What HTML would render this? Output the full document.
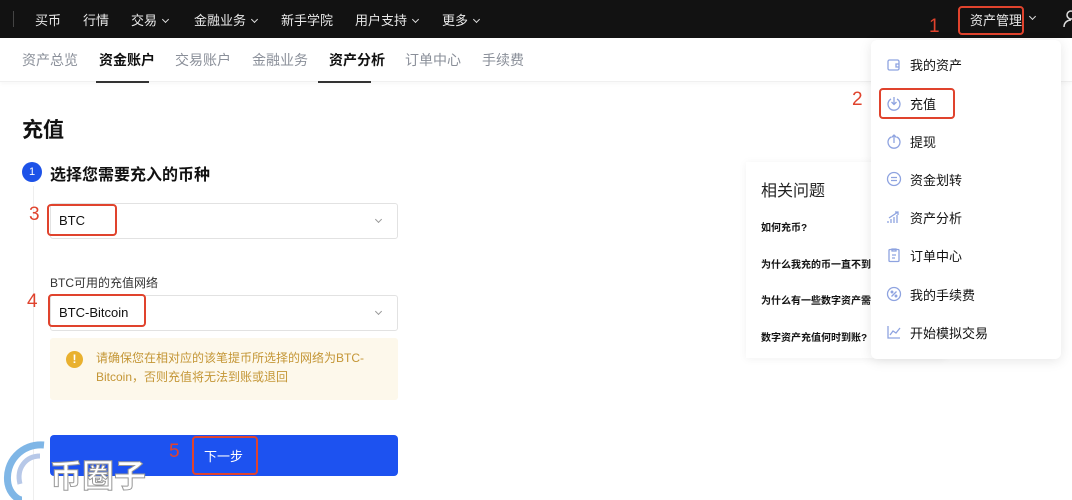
<!DOCTYPE html>
<html><head><meta charset="utf-8">
<style>
*{margin:0;padding:0;box-sizing:border-box}
body{width:1072px;height:500px;overflow:hidden;background:#fff;font-family:"Liberation Sans","Noto Sans CJK SC",sans-serif;color:#111;position:relative}
.abs{position:absolute}
.top{left:0;top:0;width:1072px;height:38px;background:#121212}
.top span{position:absolute;top:10px;color:#e8e8e8;font-size:13px;white-space:nowrap}
.chev{display:inline-block;width:5px;height:5px;border-right:1.3px solid #ddd;border-bottom:1.3px solid #ddd;transform:rotate(45deg);margin-left:6px;position:relative;top:-3px}
.tabs{left:0;top:38px;width:1072px;height:44px;border-bottom:1px solid #f0f0f0;box-shadow:0 2px 4px rgba(0,0,0,.03)}
.tabs span{position:absolute;top:12px;font-size:14px;color:#8a8f99}
.tabs span.on{color:#111;font-weight:bold}
.tabs i{position:absolute;top:43px;height:2px;background:#333;width:53px}
.red{border:2.5px solid #e0432d;border-radius:4px}
.num{color:#e0432d;font-size:19px}
.sel{border:1px solid #e2e2e2;border-radius:3px;height:36px}
.sel .chev{position:absolute;right:16px;top:13px;border-color:#999;border-width:0 1.2px 1.2px 0}
.menu{left:871px;top:40px;width:190px;height:319px;background:#fff;border-radius:6px;box-shadow:0 2px 12px rgba(0,0,0,.1)}
.menu div{position:absolute;left:39px;font-size:13px;color:#111}
.menu svg{position:absolute;left:15px}
</style></head><body>
<div class="abs top">
<div class="abs" style="left:13px;top:11px;width:1px;height:16px;background:#444"></div>
<span style="left:35px">买币</span>
<span style="left:83px">行情</span>
<span style="left:131px">交易<i class="chev"></i></span>
<span style="left:194px">金融业务<i class="chev"></i></span>
<span style="left:281px">新手学院</span>
<span style="left:355px">用户支持<i class="chev"></i></span>
<span style="left:442px">更多<i class="chev"></i></span>
<span style="left:970px">资产管理</span>
<span style="left:1024px"><i class="chev"></i></span>
</div>
<svg class="abs" style="left:1063px;top:9px" width="12" height="20" viewBox="0 0 12 20" fill="none" stroke="#ddd" stroke-width="1.5"><circle cx="8" cy="6" r="4"/><path d="M1 18c0-5 4-7 7-7"/></svg>
<div class="abs red" style="left:958px;top:6px;width:66px;height:29px"></div>
<div class="abs num" style="left:929px;top:16px">1</div>

<div class="abs tabs">
<span style="left:22px">资产总览</span>
<span class="on" style="left:99px">资金账户</span>
<span style="left:175px">交易账户</span>
<span style="left:252px">金融业务</span>
<span class="on" style="left:329px">资产分析</span>
<span style="left:405px">订单中心</span>
<span style="left:482px">手续费</span>
<i style="left:96px"></i><i style="left:318px"></i>
</div>

<div class="abs" style="left:22px;top:114px;font-size:21px;font-weight:bold">充值</div>
<div class="abs" style="left:22px;top:162px;width:20px;height:20px;border-radius:50%;background:#1d52e8;color:#fff;font-size:11px;text-align:center;line-height:20px">1</div>
<div class="abs" style="left:50px;top:161px;font-size:16px;font-weight:bold">选择您需要充入的币种</div>
<div class="abs" style="left:33px;top:186px;width:1px;height:314px;background:#eee"></div>

<div class="abs sel" style="left:50px;top:203px;width:348px"><i class="chev"></i></div>
<div class="abs" style="left:59px;top:213px;font-size:13px">BTC</div>
<div class="abs red" style="left:47px;top:204px;width:70px;height:32px"></div>
<div class="abs num" style="left:29px;top:204px">3</div>

<div class="abs" style="left:50px;top:274px;font-size:12px;color:#333">BTC可用的充值网络</div>
<div class="abs sel" style="left:50px;top:295px;width:348px"><i class="chev"></i></div>
<div class="abs" style="left:59px;top:305px;font-size:13px">BTC-Bitcoin</div>
<div class="abs red" style="left:48px;top:294px;width:98px;height:33px"></div>
<div class="abs num" style="left:27px;top:291px">4</div>

<div class="abs" style="left:50px;top:338px;width:348px;height:62px;background:#fdf8eb;border-radius:3px"></div>
<div class="abs" style="left:66px;top:351px;width:17px;height:17px;border-radius:50%;background:#e9b12f;color:#fff;font-size:12px;font-weight:bold;text-align:center;line-height:17px">!</div>
<div class="abs" style="left:96px;top:349px;width:290px;font-size:12px;line-height:19px;color:#c49636">请确保您在相对应的该笔提币所选择的网络为BTC-Bitcoin，否则充值将无法到账或退回</div>

<div class="abs" style="left:50px;top:435px;width:348px;height:41px;background:#1d52f0;border-radius:4px"></div>
<div class="abs" style="left:204px;top:446px;font-size:13px;color:#fff">下一步</div>
<div class="abs red" style="left:192px;top:436px;width:66px;height:39px"></div>
<div class="abs num" style="left:169px;top:441px">5</div>

<svg class="abs" style="left:0;top:440px" width="60" height="60" viewBox="0 0 60 60"><path d="M44 5 C22 3 4 22 8 44 C10 54 18 60 22 60" fill="none" stroke="#7fb6e6" stroke-width="7"/><path d="M40 16 C26 16 16 28 20 44" fill="none" stroke="#b7c8e8" stroke-width="5"/></svg>
<div class="abs" style="left:50px;top:451px;font-size:32px;font-weight:bold;color:#fff;-webkit-text-stroke:1px #999;letter-spacing:0px">币圈子</div>

<div class="abs" style="left:746px;top:162px;width:200px;height:196px;background:#fff;box-shadow:0 1px 8px rgba(0,0,0,.06)"></div>
<div class="abs" style="left:761px;top:177px;font-size:16px;color:#222">相关问题</div>
<div class="abs" style="left:761px;top:219px;font-size:10px;font-weight:bold">如何充币?</div>
<div class="abs" style="left:761px;top:256px;font-size:10px;font-weight:bold">为什么我充的币一直不到账</div>
<div class="abs" style="left:761px;top:292px;font-size:10px;font-weight:bold">为什么有一些数字资产需要</div>
<div class="abs" style="left:761px;top:329px;font-size:10px;font-weight:bold">数字资产充值何时到账?</div>
<div class="abs" style="left:975px;top:292px;font-size:10px;color:#ccc">Tag) ?</div>

<div class="abs menu">
<svg style="top:17px" width="16" height="16" viewBox="0 0 16 16" fill="none" stroke="#8ea3e0" stroke-width="1.3"><rect x="2" y="3" width="11" height="10" rx="1.5"/><path d="M13 7h-3v3h3"/></svg>
<div style="top:15px">我的资产</div>
<svg style="top:55px" width="16" height="16" viewBox="0 0 16 16" fill="none" stroke="#8ea3e0" stroke-width="1.3"><path d="M5 4a6 6 0 1 0 6 0M8 2v7M5.5 7L8 9.5 10.5 7"/></svg>
<div style="top:54px">充值</div>
<svg style="top:93px" width="16" height="16" viewBox="0 0 16 16" fill="none" stroke="#8ea3e0" stroke-width="1.3"><path d="M5 4a6 6 0 1 0 6 0M8 10V2M5.5 4.5L8 2l2.5 2.5"/></svg>
<div style="top:92px">提现</div>
<svg style="top:131px" width="16" height="16" viewBox="0 0 16 16" fill="none" stroke="#8ea3e0" stroke-width="1.3"><circle cx="8" cy="8" r="6.5"/><path d="M5 6.5h6M5 9.5h6"/></svg>
<div style="top:130px">资金划转</div>
<svg style="top:169px" width="16" height="16" viewBox="0 0 16 16" fill="none" stroke="#8ea3e0" stroke-width="1.3"><path d="M2 14v-2M5 14v-4M8 14V8M11 14V6M3 9l9-6M9 3h3v3"/></svg>
<div style="top:168px">资产分析</div>
<svg style="top:207px" width="16" height="16" viewBox="0 0 16 16" fill="none" stroke="#8ea3e0" stroke-width="1.3"><rect x="3" y="2.5" width="10" height="12" rx="1"/><path d="M6 2h4v2H6zM6 8h4M6 11h3"/></svg>
<div style="top:206px">订单中心</div>
<svg style="top:246px" width="16" height="16" viewBox="0 0 16 16" fill="none" stroke="#8ea3e0" stroke-width="1.3"><circle cx="8" cy="8" r="6.5"/><path d="M5.5 10.5l5-5"/><circle cx="6" cy="6" r=".8"/><circle cx="10" cy="10" r=".8"/></svg>
<div style="top:245px">我的手续费</div>
<svg style="top:284px" width="16" height="16" viewBox="0 0 16 16" fill="none" stroke="#8ea3e0" stroke-width="1.3"><path d="M2 2v12h12M4 11l3-4 3 2 4-5"/></svg>
<div style="top:283px">开始模拟交易</div>
</div>
<div class="abs red" style="left:879px;top:88px;width:76px;height:31px"></div>
<div class="abs num" style="left:852px;top:89px">2</div>
</body></html>
